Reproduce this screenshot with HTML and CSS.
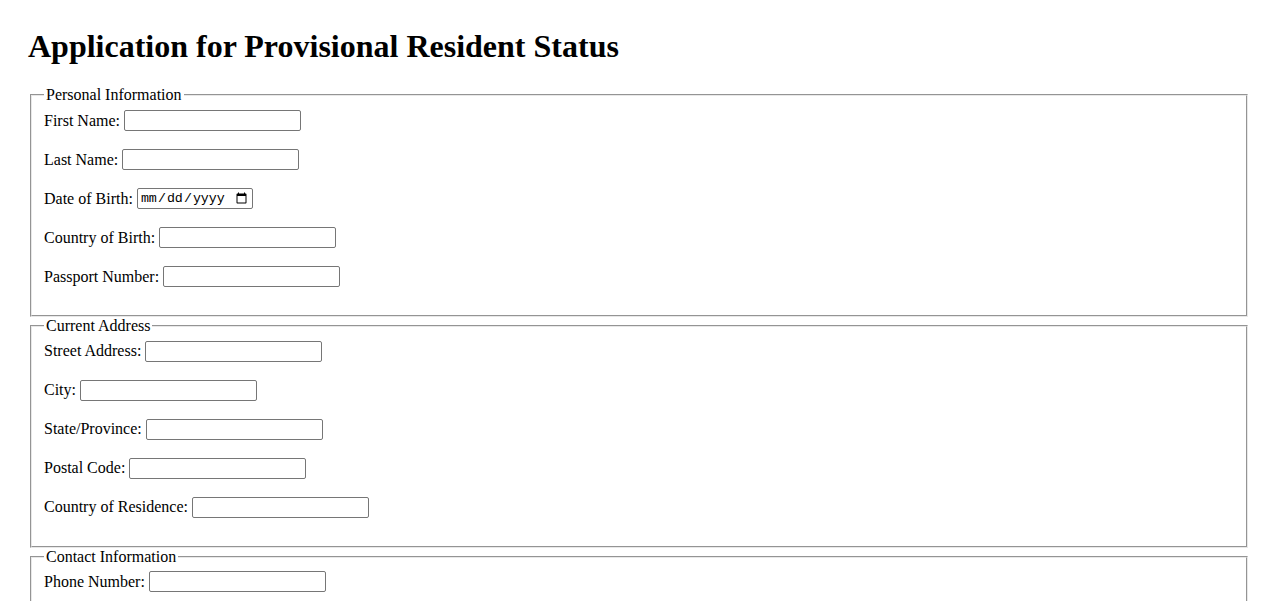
FILE: index.html
```html
<!DOCTYPE html>
<html lang="en">
<head>
<meta charset="utf-8">
<title>Application for Provisional Resident Status</title>
<link rel="stylesheet" href="styles.css">
</head>
<body>
<h1 class="title">Application for Provisional Resident Status</h1>
<form class="form">
  <fieldset class="group">
    <legend class="legend">Personal Information</legend>
    <div class="row"><label class="label" for="fn">First Name:</label><input class="field" id="fn" type="text"></div>
    <div class="row"><label class="label" for="ln">Last Name:</label><input class="field" id="ln" type="text"></div>
    <div class="row"><label class="label" for="dob">Date of Birth:</label><input class="field date" id="dob" type="date"></div>
    <div class="row"><label class="label" for="cob">Country of Birth:</label><input class="field" id="cob" type="text"></div>
    <div class="row"><label class="label" for="pp">Passport Number:</label><input class="field" id="pp" type="text"></div>
  </fieldset>
  <fieldset class="group">
    <legend class="legend">Current Address</legend>
    <div class="row"><label class="label" for="st">Street Address:</label><input class="field" id="st" type="text"></div>
    <div class="row"><label class="label" for="city">City:</label><input class="field" id="city" type="text"></div>
    <div class="row"><label class="label" for="state">State/Province:</label><input class="field" id="state" type="text"></div>
    <div class="row"><label class="label" for="zip">Postal Code:</label><input class="field" id="zip" type="text"></div>
    <div class="row"><label class="label" for="cor">Country of Residence:</label><input class="field" id="cor" type="text"></div>
  </fieldset>
  <fieldset class="group">
    <legend class="legend">Contact Information</legend>
    <div class="row"><label class="label" for="ph">Phone Number:</label><input class="field" id="ph" type="text"></div>
    <div class="row"><label class="label" for="em">Email Address:</label><input class="field" id="em" type="text"></div>
  </fieldset>
</form>
</body>
</html>
```
FILE: styles.css
```css
html {
  scrollbar-width: none;
}
body {
  margin: 0;
  padding: 28px;
  font-family: "Liberation Serif", "Times New Roman", serif;
  font-size: 16px;
  color: #000;
  background: #fff;
}
.title {
  margin: 0 0 21.44px;
  font-size: 32px;
  font-weight: bold;
  line-height: 37px;
}
.form {
  margin: 0;
}
.group {
  margin: 0 2px;
  padding: 5.6px 12px 10px;
  border: 2px groove #e8e8e8;
  min-width: 0;
}
.legend {
  padding: 0 2px;
  font-size: 16px;
}
.row {
  display: flex;
  align-items: center;
  gap: 4px;
  height: 21px;
  margin-bottom: 18px;
}
.label {
  white-space: nowrap;
}
.field {
  box-sizing: border-box;
  width: 177px;
  height: 21px;
  margin: 0;
  padding: 1px 2px;
  border: 1px solid #767676;
  border-radius: 2px;
  font-family: "Liberation Sans", Arial, sans-serif;
  font-size: 13.33px;
  background: #fff;
}
.date {
  width: 116px;
  font-family: "Liberation Mono", "Courier New", monospace;
  font-size: 13.33px;
  color: #000;
}
```
